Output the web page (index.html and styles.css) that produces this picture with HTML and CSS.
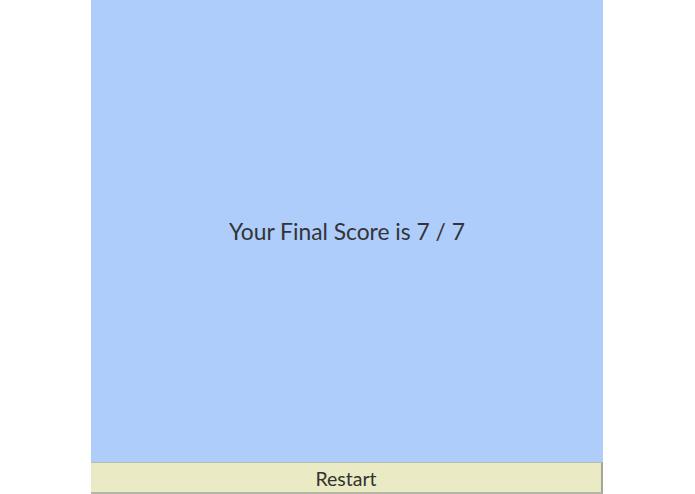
FILE: index.html
```html
<!DOCTYPE html>
<html>
<head>
<meta charset="utf-8">
<link rel="stylesheet" href="styles.css">
</head>
<body>
<div class="app">
  <div class="screen">
    <p class="score">Your Final Score is 7 / 7</p>
  </div>
  <button class="restart">Restart</button>
</div>
</body>
</html>
```
FILE: styles.css
```css
html, body {
  margin: 0;
  padding: 0;
  background: #ffffff;
}
.app {
  width: 512px;
  margin: 0 0 0 calc(50% - 256.5px);
  display: flex;
  flex-direction: column;
}
.screen {
  height: 462px;
  background: #aecdfa;
  display: flex;
  align-items: center;
  justify-content: center;
}
.score {
  margin: 0;
  font-family: "Lato", "DejaVu Sans", sans-serif;
  font-size: 22.8px;
  color: #333338;
  position: relative;
  top: 0px;
}
.restart {
  height: 32px;
  width: 512px;
  margin: 0;
  padding: 1px 0 0 0;
  background: #eaeac4;
  border: none;
  border-top: 1px solid #b8bcae;
  border-right: 2px solid #a5a59a;
  border-bottom: 2px solid #b5b5a8;
  font-family: "Lato", "DejaVu Sans", sans-serif;
  font-size: 19.5px;
  color: #333330;
}
```
